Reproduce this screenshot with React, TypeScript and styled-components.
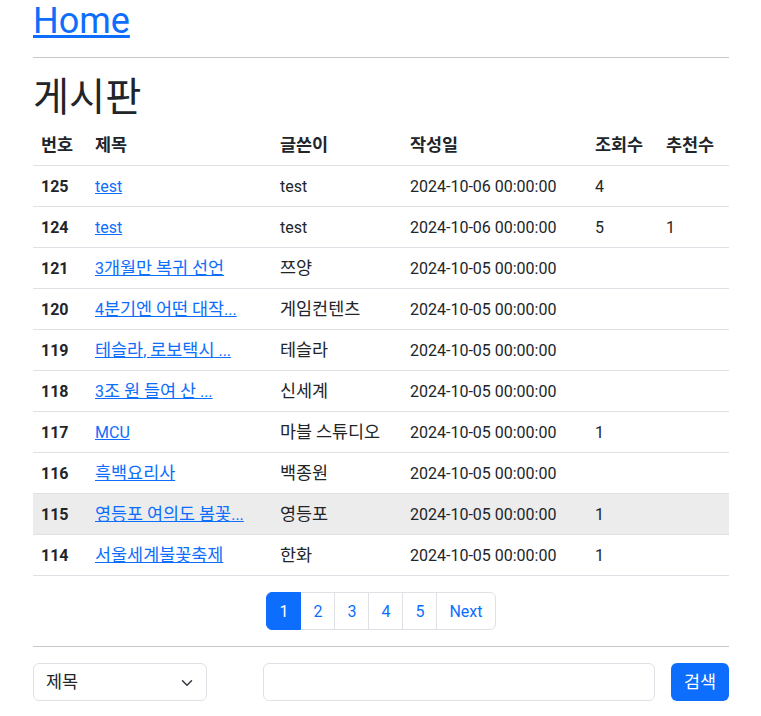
import React from "react";
import styled, { createGlobalStyle } from "styled-components";

const GlobalStyle = createGlobalStyle`
  * { box-sizing: border-box; }
  body {
    margin: 0;
    background: #fff;
    color: #212529;
    font-family: Roboto, "Noto Sans CJK KR", sans-serif;
    font-size: 16px;
    line-height: 1.5;
  }
`;

const Container = styled.div`
  width: 696px;
  margin: 0 33px;
`;

const Hangul = styled.span`
  font-family: "Noto Sans CJK KR", sans-serif;
  font-size: 1.09em;
  line-height: 1;
`;

const HomeTitle = styled.h1`
  margin: 0;
  font-size: 36px;
  font-weight: 400;
  line-height: 40px;
  height: 40px;
  padding-top: 1px;
`;

const HomeLink = styled.a`
  color: #0d6efd;
  text-decoration: underline;
`;

const Rule = styled.hr<{ $top: number }>`
  margin: ${(p) => p.$top}px 0 16px;
  border: 0;
  border-top: 1px solid #c8c9ca;
  height: 0;
`;

const BoardTitle = styled.h2`
  margin: 0 0 7px;
  font-size: 36px;
  font-weight: 400;
  line-height: 43px;
  height: 43px;
`;

const Table = styled.table`
  width: 100%;
  border-collapse: collapse;
  table-layout: fixed;
  margin-bottom: 16px;
`;

const HeadCell = styled.th`
  text-align: left;
  font-weight: 700;
  padding: 10px 8px 6px;
  height: 41px;
  line-height: 24px;
  border-bottom: 1px solid #dee2e6;
  white-space: nowrap;
`;

const Row = styled.tr<{ $hover?: boolean }>`
  background: ${(p) => (p.$hover ? "#ececec" : "transparent")};
`;

const NumCell = styled.th`
  text-align: left;
  font-weight: 700;
  padding: 9px 8px 7px;
  height: 41px;
  line-height: 24px;
  border-bottom: 1px solid #dee2e6;
`;

const Cell = styled.td`
  padding: 9px 8px 7px;
  height: 41px;
  line-height: 24px;
  border-bottom: 1px solid #dee2e6;
  white-space: nowrap;
  overflow: hidden;
`;

const TitleLink = styled.a`
  color: #0d6efd;
  text-decoration: underline;
`;

const PagerWrap = styled.nav`
  display: flex;
  justify-content: center;
`;

const Pager = styled.ul`
  display: flex;
  list-style: none;
  margin: 0;
  padding: 0;
`;

const PageItem = styled.li<{ $active?: boolean; $first?: boolean; $last?: boolean }>`
  padding: 7px 12px 5px;
  line-height: 24px;
  font-size: 16px;
  border: 1px solid ${(p) => (p.$active ? "#0d6efd" : "#dee2e6")};
  margin-left: ${(p) => (p.$first ? "0" : "-1px")};
  background: ${(p) => (p.$active ? "#0d6efd" : "#fff")};
  color: ${(p) => (p.$active ? "#fff" : "#0d6efd")};
  border-radius: ${(p) =>
    p.$first ? "6px 0 0 6px" : p.$last ? "0 6px 6px 0" : "0"};
  position: relative;
  z-index: ${(p) => (p.$active ? 1 : 0)};
`;

const SearchRow = styled.div`
  display: flex;
  align-items: center;
`;

const SelectBox = styled.div`
  width: 174px;
  height: 38px;
  border: 1px solid #dee2e6;
  border-radius: 6px;
  padding: 7px 13px 5px 12px;
  line-height: 24px;
  display: flex;
  align-items: center;
  justify-content: space-between;
  margin-right: 56px;
`;

const Input = styled.div`
  flex: 1;
  height: 38px;
  border: 1px solid #dee2e6;
  border-radius: 6px;
  margin-right: 16px;
`;

const Button = styled.button`
  width: 58px;
  height: 38px;
  border: 0;
  border-radius: 6px;
  background: #0d6efd;
  color: #fff;
  font-family: inherit;
  font-size: 16px;
  line-height: 24px;
  padding: 7px 0 5px;
`;

const ko = (text: string) => {
  const parts = text.split(/([\uAC00-\uD7A3]+(?:[ \uAC00-\uD7A3]*[\uAC00-\uD7A3])?)/);
  return parts.map((part, i) =>
    /[\uAC00-\uD7A3]/.test(part) ? <Hangul key={i}>{part}</Hangul> : part
  );
};

type Post = {
  no: number;
  title: string;
  author: string;
  date: string;
  views?: string;
  likes?: string;
  hover?: boolean;
};

const posts: Post[] = [
  { no: 125, title: "test", author: "test", date: "2024-10-06 00:00:00", views: "4" },
  { no: 124, title: "test", author: "test", date: "2024-10-06 00:00:00", views: "5", likes: "1" },
  { no: 121, title: "3개월만 복귀 선언", author: "쯔양", date: "2024-10-05 00:00:00" },
  { no: 120, title: "4분기엔 어떤 대작...", author: "게임컨텐츠", date: "2024-10-05 00:00:00" },
  { no: 119, title: "테슬라, 로보택시 ...", author: "테슬라", date: "2024-10-05 00:00:00" },
  { no: 118, title: "3조 원 들여 산 ...", author: "신세계", date: "2024-10-05 00:00:00" },
  { no: 117, title: "MCU", author: "마블 스튜디오", date: "2024-10-05 00:00:00", views: "1" },
  { no: 116, title: "흑백요리사", author: "백종원", date: "2024-10-05 00:00:00" },
  { no: 115, title: "영등포 여의도 봄꽃...", author: "영등포", date: "2024-10-05 00:00:00", views: "1", hover: true },
  { no: 114, title: "서울세계불꽃축제", author: "한화", date: "2024-10-05 00:00:00", views: "1" },
];

const colWidths = [54, 185, 130, 185, 71, 71];
const headers = ["번호", "제목", "글쓴이", "작성일", "조회수", "추천수"];
const pages = ["1", "2", "3", "4", "5", "Next"];

export default function App() {
  return (
    <>
      <GlobalStyle />
      <Container>
        <HomeTitle>
          <HomeLink href="#">Home</HomeLink>
        </HomeTitle>
        <Rule $top={17} />
        <BoardTitle>{ko("게시판")}</BoardTitle>
        <Table>
          <colgroup>
            {colWidths.map((w, i) => (
              <col key={i} style={{ width: w }} />
            ))}
          </colgroup>
          <thead>
            <tr>
              {headers.map((h) => (
                <HeadCell key={h}>{ko(h)}</HeadCell>
              ))}
            </tr>
          </thead>
          <tbody>
            {posts.map((p) => (
              <Row key={p.no} $hover={p.hover}>
                <NumCell>{p.no}</NumCell>
                <Cell>
                  <TitleLink href="#">{ko(p.title)}</TitleLink>
                </Cell>
                <Cell>{ko(p.author)}</Cell>
                <Cell>{p.date}</Cell>
                <Cell>{p.views ?? ""}</Cell>
                <Cell>{p.likes ?? ""}</Cell>
              </Row>
            ))}
          </tbody>
        </Table>
        <PagerWrap>
          <Pager>
            {pages.map((pg, i) => (
              <PageItem
                key={pg}
                $active={i === 0}
                $first={i === 0}
                $last={i === pages.length - 1}
              >
                {pg}
              </PageItem>
            ))}
          </Pager>
        </PagerWrap>
        <Rule $top={16} />
        <SearchRow>
          <SelectBox>
            <span>{ko("제목")}</span>
            <svg width="12" height="12" viewBox="0 0 16 16" fill="none">
              <path
                d="M2 5l6 6 6-6"
                stroke="#343a40"
                strokeWidth="2"
                strokeLinecap="round"
                strokeLinejoin="round"
              />
            </svg>
          </SelectBox>
          <Input />
          <Button>{ko("검색")}</Button>
        </SearchRow>
      </Container>
    </>
  );
}
